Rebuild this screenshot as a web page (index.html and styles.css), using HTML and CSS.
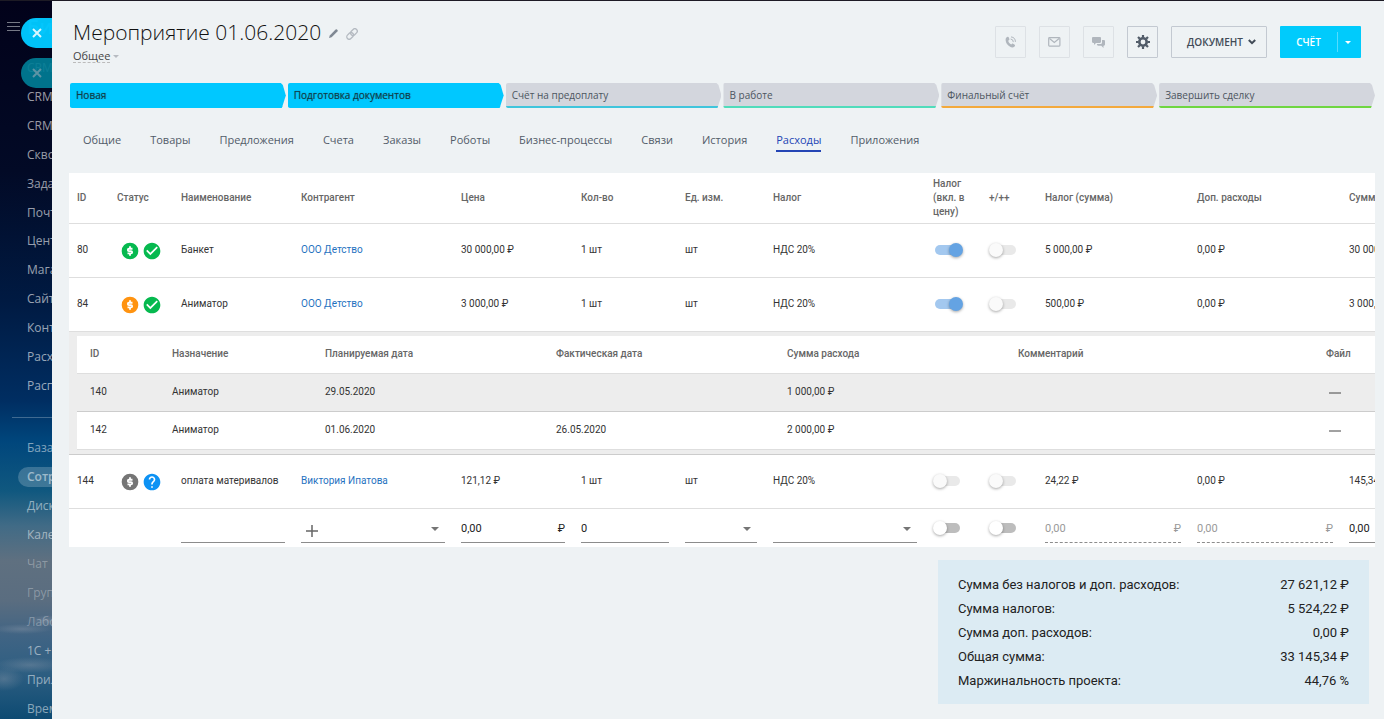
FILE: index.html
```html
<!DOCTYPE html>
<html lang="ru">
<head>
    <meta charset="UTF-8">
    <meta name="viewport" content="width=device-width, initial-scale=1.0">
    <title>Мероприятие 01.06.2020</title>
    <link rel="stylesheet" href="styles.css">
</head>
<body>

<!-- icons -->
<svg class="sprite" aria-hidden="true">
    <symbol id="i-dollar" viewBox="0 0 24 24">
        <circle cx="12" cy="12" r="10" fill="currentColor"/>
        <path d="M15 9.3h-4.2a1.4 1.4 0 0 0 0 2.8h2.4a1.4 1.4 0 0 1 0 2.8H9M12 6.4v3M12 15v2.8" fill="none" stroke="#fff" stroke-width="2.2"/>
    </symbol>
    <symbol id="i-check" viewBox="0 0 24 24">
        <path fill="currentColor" d="M12 2C6.48 2 2 6.48 2 12s4.48 10 10 10 10-4.48 10-10S17.52 2 12 2zm-2 15l-5-5 1.41-1.41L10 14.17l7.59-7.59L19 8l-9 9z"/>
    </symbol>
    <symbol id="i-help" viewBox="0 0 24 24">
        <path fill="currentColor" d="M12 2C6.48 2 2 6.48 2 12s4.48 10 10 10 10-4.48 10-10S17.52 2 12 2zm1 17h-2v-2h2v2zm2.07-7.75l-.9.92C13.45 12.9 13 13.5 13 15h-2v-.5c0-1.1.45-2.1 1.17-2.83l1.24-1.26c.37-.36.59-.86.59-1.41 0-1.1-.9-2-2-2s-2 .9-2 2H8c0-2.21 1.79-4 4-4s4 1.79 4 4c0 .88-.36 1.68-.93 2.25z"/>
    </symbol>
    <symbol id="i-close" viewBox="0 0 10 10">
        <path d="M1 1l8 8M9 1L1 9" stroke="currentColor" stroke-width="2" fill="none"/>
    </symbol>
    <symbol id="i-down" viewBox="0 0 8 4">
        <path d="M0 0h8L4 4z" fill="currentColor"/>
    </symbol>
</svg>

<div class="app">
    <aside class="sidebar">
        <button class="burger" type="button" aria-label="Меню"><span></span><span></span><span></span></button>
        <div class="logo">Би</div>
        <ul class="menu menu-top">
            <li><a href="#">CRM</a></li>
            <li><a href="#">CRM</a></li>
            <li><a href="#">CRM</a></li>
            <li><a href="#">Сквозная</a></li>
            <li><a href="#">Задачи</a></li>
            <li><a href="#">Почта</a></li>
            <li><a href="#">Центр</a></li>
            <li><a href="#">Магазины</a></li>
            <li><a href="#">Сайты</a></li>
            <li><a href="#">Контакт</a></li>
            <li><a href="#">Расходы</a></li>
            <li><a href="#">Расписание</a></li>
        </ul>
        <ul class="menu menu-bottom">
            <li><a href="#">База</a></li>
            <li><a href="#" class="current">Сотрудники</a></li>
            <li><a href="#">Диск</a></li>
            <li><a href="#">Календарь</a></li>
            <li><a href="#" class="dim">Чат</a></li>
            <li><a href="#" class="dim">Группы</a></li>
            <li><a href="#" class="dim">Лаборатория</a></li>
            <li><a href="#">1С + CRM</a></li>
            <li><a href="#">Приложения</a></li>
            <li><a href="#">Время</a></li>
        </ul>
        <button class="close close-first" type="button" aria-label="Закрыть"><svg width="10" height="10"><use href="#i-close"/></svg></button>
        <button class="close close-second" type="button" aria-label="Закрыть"><svg width="10" height="10"><use href="#i-close"/></svg></button>
    </aside>

    <main class="panel">
        <header class="head">
            <div class="head-title">
                <h1>Мероприятие 01.06.2020
                    <svg class="pencil" width="9" height="9" viewBox="0 0 9 9"><path d="M0 9l.8-2.6L6.6.6a1 1 0 0 1 1.4 0l.4.4a1 1 0 0 1 0 1.4L2.6 8.2z" fill="#7f8893"/></svg>
                    <svg class="chain" width="12" height="12" viewBox="0 0 12 12"><g fill="none" stroke="#b4bac1" stroke-width="1.3" transform="rotate(-45 6 6)"><rect x="-.4" y="3.6" width="7.4" height="4.8" rx="2.4"/><rect x="5" y="3.6" width="7.4" height="4.8" rx="2.4"/></g></svg>
                </h1>
                <button class="category" type="button"><span>Общее</span><svg width="6" height="3"><use href="#i-down"/></svg></button>
            </div>
            <div class="actions">
                <button class="btn btn-icon off" type="button" aria-label="Позвонить">
                    <svg width="12" height="13" viewBox="0 0 12 13"><path d="M2.6.8c.5-.2.9 0 1.1.5l.7 1.700c.2.4 0 .8-.3 1l-.9.7c.4 1.600 1.500 3 3 3.800l.9-.7c.3-.3.700-.3 1-.1l1.600 1c.4.300.5.700.3 1.100-.5 1-1.500 1.700-2.600 1.600C3.900 11 .6 7.300.6 3.700.6 2.400 1.400 1.200 2.600.8z" fill="currentColor"/><path d="M5.600 3a3 3 0 0 1 2.700 3.100M6 .9a5 5 0 0 1 4.400 5" fill="none" stroke="currentColor"/></svg>
                </button>
                <button class="btn btn-icon off" type="button" aria-label="Письмо">
                    <svg width="13" height="10" viewBox="0 0 13 10"><rect x=".7" y=".7" width="11.2" height="8.4" rx=".8" fill="none" stroke="currentColor" stroke-width="1.2"/><path d="M1.5 1.500l4.800 4 4.800-4" fill="none" stroke="currentColor" stroke-width="1.2"/></svg>
                </button>
                <button class="btn btn-icon off" type="button" aria-label="Чат">
                    <svg width="13" height="11" viewBox="0 0 13 11"><path d="M1.2 0h6.600C8.600 0 9 .5 9 1.200v3.600C9 5.500 8.500 6 7.800 6H4L2 8V6h-.8C.5 6 0 5.500 0 4.800V1.200C0 .5.5 0 1.200 0z" fill="currentColor"/><path d="M10 3h1.800c.7 0 1.200.5 1.200 1.200v3.400c0 .7-.5 1.200-1.200 1.200h-.3V11L9.300 8.800H6.200C5.500 8.800 5 8.300 5 7.600V7h3.600C9.500 7 10 6.400 10 5.500z" fill="currentColor"/></svg>
                </button>
                <button class="btn btn-icon" type="button" aria-label="Настройки">
                    <svg width="14" height="14" viewBox="0 0 14 14"><circle cx="7" cy="7" r="3.7" fill="none" stroke="currentColor" stroke-width="2.6"/><path d="M7 0v2.4M7 11.6V14M0 7h2.4M11.6 7H14M2 2l1.8 1.8M10.2 10.2L12 12M2 12l1.8-1.8M10.2 3.8L12 2" stroke="currentColor" stroke-width="2.2"/></svg>
                </button>
                <button class="btn btn-doc" type="button">ДОКУМЕНТ
                    <svg width="8" height="6" viewBox="0 0 8 6"><path d="M.8 1L4 4.2 7.200 1" fill="none" stroke="currentColor" stroke-width="2"/></svg>
                </button>
                <div class="btn-split">
                    <button class="bill" type="button">СЧЁТ</button>
                    <button class="bill-more" type="button" aria-label="Ещё"><svg width="6" height="3"><use href="#i-down"/></svg></button>
                </div>
            </div>
        </header>

        <div class="stages">
            <button type="button" class="stage done">Новая</button>
            <button type="button" class="stage done">Подготовка документов</button>
            <button type="button" class="stage cyan">Счёт на предоплату</button>
            <button type="button" class="stage teal">В работе</button>
            <button type="button" class="stage orange">Финальный счёт</button>
            <button type="button" class="stage green">Завершить сделку</button>
        </div>

        <nav class="tabs">
            <a href="#">Общие</a>
            <a href="#">Товары</a>
            <a href="#">Предложения</a>
            <a href="#">Счета</a>
            <a href="#">Заказы</a>
            <a href="#">Роботы</a>
            <a href="#">Бизнес-процессы</a>
            <a href="#">Связи</a>
            <a href="#">История</a>
            <a href="#" class="active">Расходы</a>
            <a href="#">Приложения</a>
        </nav>

        <div class="table-wrap">
            <table class="costs">
                <colgroup>
                    <col class="c-id"><col class="c-status"><col class="c-mid"><col class="c-wide"><col class="c-mid"><col class="c-qty"><col class="c-unit"><col class="c-wide"><col class="c-switch"><col class="c-switch"><col class="c-sum"><col class="c-sum"><col class="c-mid">
                </colgroup>
                <thead>
                    <tr>
                        <th>ID</th>
                        <th>Статус</th>
                        <th>Наименование</th>
                        <th>Контрагент</th>
                        <th>Цена</th>
                        <th>Кол-во</th>
                        <th>Ед. изм.</th>
                        <th>Налог</th>
                        <th>Налог (вкл. в цену)</th>
                        <th>+/++</th>
                        <th>Налог (сумма)</th>
                        <th>Доп. расходы</th>
                        <th>Сумма</th>
                    </tr>
                </thead>
                <tbody>
                    <tr>
                        <td>80</td>
                        <td><div class="status"><svg class="ok"><use href="#i-dollar"/></svg><svg class="ok"><use href="#i-check"/></svg></div></td>
                        <td>Банкет</td>
                        <td><a href="#">ООО Детство</a></td>
                        <td>30 000,00 ₽</td>
                        <td>1 шт</td>
                        <td>шт</td>
                        <td>НДС 20%</td>
                        <td><input class="switch" type="checkbox" aria-label="Налог включён в цену" checked disabled></td>
                        <td><input class="switch" type="checkbox" aria-label="+/++" disabled></td>
                        <td>5 000,00 ₽</td>
                        <td>0,00 ₽</td>
                        <td>30 000,00 ₽</td>
                    </tr>
                    <tr>
                        <td>84</td>
                        <td><div class="status"><svg class="warn"><use href="#i-dollar"/></svg><svg class="ok"><use href="#i-check"/></svg></div></td>
                        <td>Аниматор</td>
                        <td><a href="#">ООО Детство</a></td>
                        <td>3 000,00 ₽</td>
                        <td>1 шт</td>
                        <td>шт</td>
                        <td>НДС 20%</td>
                        <td><input class="switch" type="checkbox" aria-label="Налог включён в цену" checked disabled></td>
                        <td><input class="switch" type="checkbox" aria-label="+/++" disabled></td>
                        <td>500,00 ₽</td>
                        <td>0,00 ₽</td>
                        <td>3 000,00 ₽</td>
                    </tr>
                    <tr>
                        <td class="detail" colspan="13">
                            <table class="payments">
                                <colgroup>
                                    <col class="p-id"><col class="p-name"><col class="p-date"><col class="p-date"><col class="p-date"><col class="p-comment"><col>
                                </colgroup>
                                <thead>
                                    <tr>
                                        <th>ID</th>
                                        <th>Назначение</th>
                                        <th>Планируемая дата</th>
                                        <th>Фактическая дата</th>
                                        <th>Сумма расхода</th>
                                        <th>Комментарий</th>
                                        <th>Файл</th>
                                    </tr>
                                </thead>
                                <tbody>
                                    <tr class="shaded">
                                        <td>140</td>
                                        <td>Аниматор</td>
                                        <td>29.05.2020</td>
                                        <td></td>
                                        <td>1 000,00 ₽</td>
                                        <td></td>
                                        <td><svg class="dash" width="12" height="2"><path d="M0 1h12" stroke="#444"/></svg></td>
                                    </tr>
                                    <tr>
                                        <td>142</td>
                                        <td>Аниматор</td>
                                        <td>01.06.2020</td>
                                        <td>26.05.2020</td>
                                        <td>2 000,00 ₽</td>
                                        <td></td>
                                        <td><svg class="dash" width="12" height="2"><path d="M0 1h12" stroke="#444"/></svg></td>
                                    </tr>
                                </tbody>
                            </table>
                        </td>
                    </tr>
                    <tr>
                        <td>144</td>
                        <td><div class="status"><svg class="none"><use href="#i-dollar"/></svg><svg class="ask"><use href="#i-help"/></svg></div></td>
                        <td>оплата материвалов</td>
                        <td><a href="#">Виктория Ипатова</a></td>
                        <td>121,12 ₽</td>
                        <td>1 шт</td>
                        <td>шт</td>
                        <td>НДС 20%</td>
                        <td><input class="switch" type="checkbox" aria-label="Налог включён в цену" disabled></td>
                        <td><input class="switch" type="checkbox" aria-label="+/++" disabled></td>
                        <td>24,22 ₽</td>
                        <td>0,00 ₽</td>
                        <td>145,34 ₽</td>
                    </tr>
                    <tr class="new-row">
                        <td></td>
                        <td></td>
                        <td><div class="field"><input type="text" aria-label="Наименование"></div></td>
                        <td>
                            <div class="field">
                                <button class="add" type="button" aria-label="Добавить контрагента"><svg width="12" height="12" viewBox="0 0 12 12"><path d="M6 0v12M0 6h12" stroke="#666" stroke-width="1.5"/></svg></button>
                                <select aria-label="Контрагент"><option></option></select>
                                <svg class="arrow"><use href="#i-down"/></svg>
                            </div>
                        </td>
                        <td><div class="field"><input type="text" value="0,00" aria-label="Цена"><span>₽</span></div></td>
                        <td><div class="field"><input type="text" value="0" aria-label="Кол-во"></div></td>
                        <td><div class="field"><select aria-label="Ед. изм."><option></option></select><svg class="arrow"><use href="#i-down"/></svg></div></td>
                        <td><div class="field"><select aria-label="Налог"><option></option></select><svg class="arrow"><use href="#i-down"/></svg></div></td>
                        <td><input class="switch" type="checkbox" aria-label="Налог включён в цену"></td>
                        <td><input class="switch" type="checkbox" aria-label="+/++"></td>
                        <td><div class="field locked"><input type="text" value="0,00" aria-label="Налог (сумма)" disabled><span>₽</span></div></td>
                        <td><div class="field locked"><input type="text" value="0,00" aria-label="Доп. расходы" disabled><span>₽</span></div></td>
                        <td><div class="field"><input type="text" value="0,00" aria-label="Сумма"><span>₽</span></div></td>
                    </tr>
                </tbody>
            </table>
        </div>

        <dl class="totals">
            <div><dt>Сумма без налогов и доп. расходов:</dt><dd>27 621,12 ₽</dd></div>
            <div><dt>Сумма налогов:</dt><dd>5 524,22 ₽</dd></div>
            <div><dt>Сумма доп. расходов:</dt><dd>0,00 ₽</dd></div>
            <div><dt>Общая сумма:</dt><dd>33 145,34 ₽</dd></div>
            <div><dt>Маржинальность проекта:</dt><dd>44,76 %</dd></div>
        </dl>
    </main>
</div>

</body>
</html>
```

FILE: styles.css
```css
* {
    box-sizing: border-box;
}

body {
    margin: 0;
    font-family: "Open Sans", "Noto Sans", sans-serif;
    color: #333;
    background: #eef2f4;
    overflow: hidden;
}

button, input, select {
    margin: 0;
    padding: 0;
    border: none;
    background: none;
    font-family: inherit;
    color: inherit;
}

a {
    text-decoration: none;
}

svg {
    flex: none;
}

.sprite {
    position: absolute;
    width: 0;
    height: 0;
}

.app {
    display: flex;
    height: 100vh;
    border-top: 1px solid #1d1b25;
}

/* sidebar */
.sidebar {
    position: relative;
    flex: none;
    width: 52px;
    overflow: hidden;
    background:
        radial-gradient(ellipse 30px 5px at 22px 628px, rgba(150, 160, 175, .35), transparent),
        radial-gradient(ellipse 22px 6px at 48px 620px, rgba(150, 160, 175, .4), transparent),
        radial-gradient(ellipse 36px 8px at 30px 664px, rgba(150, 160, 175, .35), transparent),
        radial-gradient(ellipse 20px 12px at 4px 678px, rgba(150, 160, 175, .35), transparent),
        linear-gradient(#02021a 0, #020a26 170px, #001a42 300px, #002e62 400px, #00467c 440px, #10587f 490px, #416b86 525px, #5f7080 560px, #5a6d80 600px, #406484 635px, #2f5f82 670px, #0c4a72 719px);
}

.burger {
    position: absolute;
    top: 21px;
    left: 7px;
    display: flex;
    flex-direction: column;
    gap: 3px;
}

.burger span {
    width: 13px;
    height: 1px;
    background: #767986;
}

.logo {
    height: 53px;
    padding: 12px 0 0 27px;
    font-size: 20px;
    line-height: 28px;
    font-weight: 600;
    color: #8a8d98;
}

.menu {
    display: flex;
    flex-direction: column;
    margin: 0;
    padding: 0;
    list-style: none;
    font-size: 12px;
    white-space: nowrap;
}

.menu-top {
    height: 346px;
}

.menu-bottom {
    height: 306px;
    margin: 17px 0 0 12px;
    padding-top: 16px;
    border-top: 1px solid rgba(255, 255, 255, .25);
}

.menu li {
    flex: 1;
    display: flex;
    align-items: center;
}

.menu a {
    flex: 1;
    min-width: 0;
    padding-left: 27px;
    overflow: hidden;
    line-height: 20px;
    color: rgba(255, 255, 255, .6);
}

.menu-bottom a {
    padding-left: 15px;
    color: rgba(255, 255, 255, .5);
}

.menu-bottom .dim {
    color: rgba(255, 255, 255, .3);
}

.menu-bottom .current {
    margin-left: 6px;
    padding-left: 9px;
    border-radius: 10px 0 0 10px;
    background: rgba(255, 255, 255, .2);
    font-weight: 600;
}

.close {
    position: absolute;
    left: 21px;
    width: 31px;
    height: 30px;
    border-radius: 15px 0 0 15px;
    color: #d9f6ff;
}

.close-first {
    top: 17px;
    background: rgba(0, 200, 255, .97);
}

.close-second {
    top: 57px;
    background: rgba(0, 125, 150, .92);
    color: #5d94a5;
}

/* panel */
.panel {
    flex: 1;
    min-width: 0;
}

.head {
    display: flex;
    justify-content: space-between;
    align-items: flex-start;
    padding: 16px 23px 20px 21px;
}

h1 {
    display: flex;
    align-items: center;
    gap: 8px;
    margin: 0 0 2px;
    font-size: 21px;
    line-height: 30px;
    font-weight: 300;
    color: #111;
}

.pencil,
.chain {
    margin-top: 3px;
}

.category {
    display: flex;
    align-items: center;
    gap: 3px;
    font-size: 11px;
    line-height: 13px;
    color: #444;
}

.category span {
    border-bottom: 1px dashed #bbb;
}

.category svg {
    color: #b7bbc1;
}

.actions {
    display: flex;
    gap: 13px;
    margin-top: 9px;
}

.btn {
    display: flex;
    align-items: center;
    justify-content: center;
    height: 32px;
    border: 1px solid #c3c9d1;
    border-radius: 1px;
    color: #525c69;
}

.btn-icon {
    width: 31px;
}

.btn-icon.off {
    border-color: #dde1e5;
    color: #b0b6bd;
}

.btn-doc {
    gap: 5px;
    padding: 0 10px 0 15px;
    font-size: 10px;
    font-weight: 600;
    color: #414b57;
}

.btn-split {
    display: flex;
    align-items: center;
    height: 32px;
    border-radius: 1px;
    background: #00cbfc;
    color: #fff;
}

.bill {
    width: 58px;
    height: 20px;
    border-right: 1px solid #55dcff;
    font-size: 10px;
    font-weight: 600;
}

.bill-more {
    display: flex;
    justify-content: center;
    width: 23px;
    padding-right: 3px;
}

.stages {
    display: flex;
    gap: 2px;
    padding: 0 9px 0 18px;
}

.stage {
    flex: 1;
    height: 25px;
    padding: 0 6px;
    border-bottom: 2px solid #00c8ff;
    border-radius: 2px;
    font-size: 10px;
    text-align: left;
    background: #d3d6dd;
    color: #4c5560;
    clip-path: polygon(0 0, calc(100% - 5px) 0, calc(100% - 3px) 2px, 100% 50%, calc(100% - 4px) 100%, 0 100%);
}

.stage.done {
    background: #00c8ff;
    color: #103c48;
    text-shadow: 0 0 1px rgba(16, 60, 72, .6);
}

.stage.cyan {
    border-color: #3fc5dc;
}

.stage.teal {
    border-color: #50dcbb;
}

.stage.orange {
    border-color: #f3a93c;
}

.stage.green {
    border-color: #6fd641;
}

.tabs {
    display: flex;
    gap: 29px;
    padding: 22px 31px 21px;
    font-size: 11px;
    line-height: 20px;
    font-weight: 500;
}

.tabs a {
    border-bottom: 2px solid transparent;
    color: #525c69;
}

.tabs .active {
    border-color: #2445b5;
    color: #2445b5;
}

/* tables */
.table-wrap {
    margin: 0 9px 0 17px;
    overflow: hidden;
    background: #fff;
    font-family: Roboto, sans-serif;
}

table {
    table-layout: fixed;
    border-collapse: separate;
    border-spacing: 0;
    font-size: 10px;
    line-height: 14px;
}

.costs {
    width: 1392px;
}

.c-id { width: 40px; }
.c-status { width: 64px; }
.c-mid { width: 120px; }
.c-wide { width: 160px; }
.c-qty { width: 104px; }
.c-unit { width: 88px; }
.c-switch { width: 56px; }
.c-sum { width: 152px; }

th, td {
    height: 54px;
    padding: 0 8px 2px;
    border-bottom: 1px solid #dedede;
    text-align: left;
    white-space: nowrap;
}

th {
    height: 51px;
    padding-bottom: 0;
    font-weight: 500;
    color: #666;
    white-space: normal;
}

td a {
    color: #1f72bf;
}

.status {
    display: flex;
    gap: 2px;
    padding: 2px 0 0 3px;
}

.status svg {
    width: 20px;
    height: 20px;
}

.ok { color: #06b94f; }
.warn { color: #ff9310; }
.none { color: #757575; }
.ask { color: #0d92f4; }

.costs .detail {
    height: auto;
    padding: 4px 0 4px 8px;
    border-color: #ccc;
    background: #ededed;
}

.payments {
    width: 100%;
    background: #fff;
}

.p-id { width: 82px; }
.p-name { width: 153px; }
.p-date { width: 231px; }
.p-comment { width: 308px; }

.payments th,
.payments td {
    height: 38px;
    padding: 0 13px 2px;
}

.payments .shaded td {
    border-color: #ccc;
    background: #ededed;
}

.dash {
    display: block;
    margin: 2px 0 0 3px;
}

.switch {
    display: block;
    appearance: none;
    width: 25px;
    height: 10px;
    margin-left: 2px;
    border-radius: 5px;
    background: #bdbdbd;
}

.switch::before {
    content: "";
    display: block;
    width: 14px;
    height: 14px;
    margin: -2px 0 0 -2px;
    border-radius: 50%;
    background: #fff;
    box-shadow: 0 1px 3px rgba(0, 0, 0, .35);
}

.switch:disabled {
    background: #e9e9e9;
}

.switch:disabled::before {
    background: #fafafa;
}

.switch:checked {
    background: #a3c8ef;
}

.switch:checked::before {
    margin-left: 14px;
    background: #64a3e3;
}

/* new cost form */
.new-row td {
    height: 38px;
    padding: 4px 8px;
    border-bottom: none;
}

.field {
    display: flex;
    align-items: center;
    height: 30px;
    padding-top: 2px;
    border-bottom: 1px solid #8c8c8c;
    font-size: 11px;
    color: #222;
}

.field input,
.field select {
    flex: 1;
    min-width: 0;
    height: 26px;
    appearance: none;
    font-size: 11px;
}

.field.locked {
    border-bottom-style: dashed;
    color: #999;
}

.add {
    display: flex;
    padding: 4px 5px 0;
}

.arrow {
    width: 8px;
    height: 4px;
    margin-right: 6px;
    color: #757575;
}

.totals {
    width: 431px;
    margin: 13px 15px 0 auto;
    padding: 13px 20px 11px;
    background: #dcebf3;
    font: 13px/24px Roboto, sans-serif;
    color: #222;
}

.totals div {
    display: flex;
    justify-content: space-between;
}

.totals dd {
    margin: 0;
}
```
